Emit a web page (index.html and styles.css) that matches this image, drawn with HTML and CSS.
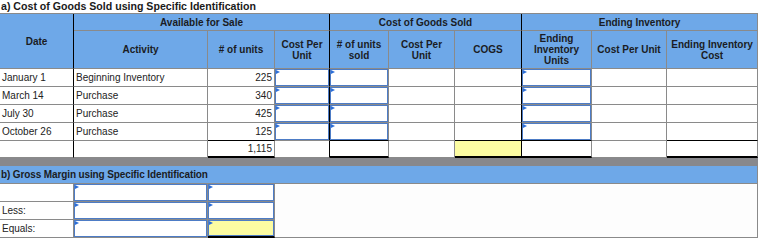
FILE: index.html
```html
<!DOCTYPE html>
<html>
<head>
<meta charset="utf-8">
<link rel="stylesheet" href="styles.css">
</head>
<body>
<table class="sheet">
  <colgroup>
    <col class="w1"><col class="w2"><col class="w3"><col class="w4"><col class="w5">
    <col class="w6"><col class="w7"><col class="w8"><col class="w9"><col class="w10">
  </colgroup>
  <tr class="r-title"><td colspan="10" class="title">a) Cost of Goods Sold using Specific Identification</td></tr>
  <tr class="r-h1">
    <th rowspan="2" class="hd g">Date</th>
    <th colspan="3" class="hd g">Available for Sale</th>
    <th colspan="3" class="hd g">Cost of Goods Sold</th>
    <th colspan="3" class="hd">Ending Inventory</th>
  </tr>
  <tr class="r-h2">
    <th class="hd">Activity</th>
    <th class="hd"># of units</th>
    <th class="hd g">Cost Per<br>Unit</th>
    <th class="hd"># of units<br>sold</th>
    <th class="hd">Cost Per<br>Unit</th>
    <th class="hd g">COGS</th>
    <th class="hd">Ending<br>Inventory<br>Units</th>
    <th class="hd">Cost Per Unit</th>
    <th class="hd">Ending Inventory<br>Cost</th>
  </tr>
  <tr class="r-d">
    <td class="g">January 1</td><td>Beginning Inventory</td><td class="num">225</td>
    <td class="in g"></td><td class="in"></td><td></td><td class="g"></td>
    <td class="in"></td><td></td><td></td>
  </tr>
  <tr class="r-d">
    <td class="g">March 14</td><td>Purchase</td><td class="num">340</td>
    <td class="in g"></td><td class="in"></td><td></td><td class="g"></td>
    <td class="in"></td><td></td><td></td>
  </tr>
  <tr class="r-d">
    <td class="g">July 30</td><td>Purchase</td><td class="num">425</td>
    <td class="in g"></td><td class="in"></td><td></td><td class="g"></td>
    <td class="in"></td><td></td><td></td>
  </tr>
  <tr class="r-d">
    <td class="g">October 26</td><td>Purchase</td><td class="num bk">125</td>
    <td class="in g"></td><td class="in bk"></td><td></td><td class="g bk"></td>
    <td class="in bk"></td><td></td><td class="bk"></td>
  </tr>
  <tr class="r-tot">
    <td class="g"></td><td></td><td class="num tot">1,115</td>
    <td class="g"></td><td class="tot"></td><td></td><td class="g tot yel"></td>
    <td class="tot"></td><td></td><td class="tot"></td>
  </tr>
  <tr class="r-gap"><td colspan="10" class="gap"></td></tr>
  <tr class="r-b"><td colspan="10" class="bhead">b) Gross Margin using Specific Identification</td></tr>
  <tr class="r-d">
    <td></td><td class="in"></td><td class="in"></td>
    <td colspan="7" rowspan="3" class="blank"></td>
  </tr>
  <tr class="r-d">
    <td>Less:</td><td class="in"></td><td class="in"></td>
  </tr>
  <tr class="r-d">
    <td>Equals:</td><td class="in"></td><td class="in yel tot"></td>
  </tr>
</table>
</body>
</html>
```

FILE: styles.css
```css
* { box-sizing: border-box; }

body {
  margin: 0;
  background: #ffffff;
  font-family: "Liberation Sans", Arial, sans-serif;
}

.sheet {
  border-collapse: separate;
  border-spacing: 0;
  table-layout: fixed;
  width: 758px;
  font-size: 10px;
  color: #222222;
}

.w1 { width: 74px; }
.w2 { width: 134px; }
.w3 { width: 67px; }
.w4 { width: 55px; }
.w5 { width: 59px; }
.w6 { width: 66px; }
.w7 { width: 67px; }
.w8 { width: 70px; }
.w9 { width: 75px; }
.w10 { width: 91px; }

.sheet td,
.sheet th {
  border-right: 1px solid #8a8a8a;
  border-bottom: 1px solid #8a8a8a;
  padding: 0 2px;
  vertical-align: middle;
  white-space: nowrap;
  overflow: hidden;
  font-weight: normal;
  text-align: left;
  line-height: 11px;
}

.r-title { height: 14px; }
.r-h1 { height: 17px; }
.r-h2 { height: 38px; }
.r-d { height: 18px; }
.r-tot { height: 17px; }
.r-gap { height: 8px; }
.r-b { height: 18px; }

.sheet .title {
  border-right: 0;
  padding: 0 1px;
  font-size: 10.6px;
  font-weight: bold;
  color: #1a1a1a;
}

.sheet .hd {
  background: #6ea8e8;
  color: #1a1c24;
  font-weight: bold;
  text-align: center;
  padding: 0 1px;
}

.sheet .g { border-right-color: #000000; }
.sheet .bk { border-bottom-color: #000000; }
.sheet .tot { border-bottom: 2px solid #000000; }
.sheet .num { text-align: right; }
.sheet .yel { background: #fcfca2; }

.sheet .in {
  position: relative;
  box-shadow: inset 0 0 0 1px #4d7cc6;
}

.sheet .in::before {
  content: "";
  position: absolute;
  top: 1px;
  left: 1px;
  border-left: 4px solid #2d6fd8;
  border-top: 2px solid transparent;
  border-bottom: 2px solid transparent;
}

.sheet .gap {
  background: #88888c;
  border: 0;
  padding: 0;
}

.sheet .bhead {
  background: #6ea8e8;
  color: #1a1c24;
  font-weight: bold;
  letter-spacing: -0.12px;
  padding: 0 1px;
}

.sheet .blank { background: #fdfdfd; }
```
